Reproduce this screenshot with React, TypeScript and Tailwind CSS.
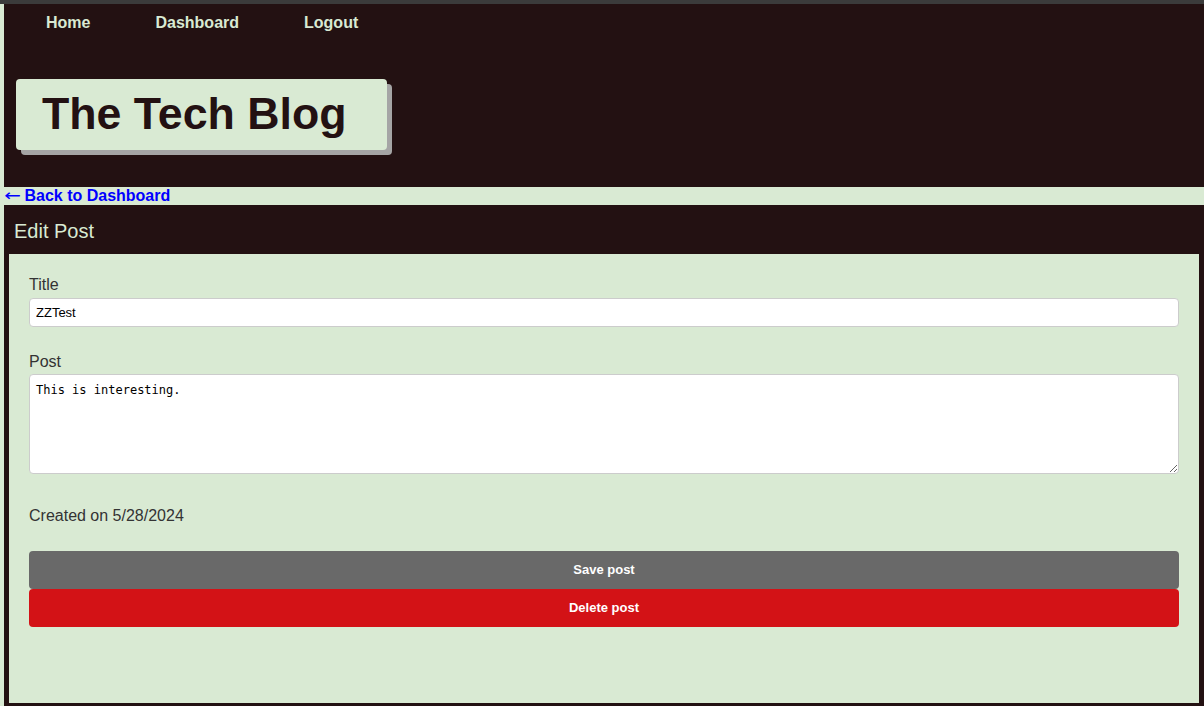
import React from "react";

const navLinks = ["Home", "Dashboard", "Logout"];

function Header() {
  return (
    <header className="bg-[#231112] h-[183px] pt-[10px]">
      <nav className="flex gap-[65px] pl-[42px]">
        {navLinks.map((link) => (
          <a key={link} href="#" className="text-[16px] font-bold text-[#d9ead3] leading-[18px]">
            {link}
          </a>
        ))}
      </nav>
      <div className="ml-[12px] mt-[47px] w-[371px] h-[71px] rounded-[4px] bg-[#d9ead3] shadow-[5px_5px_0_#a5a5a5] pl-[26px] flex items-center">
        <h1 className="text-[44.7px] font-bold text-[#231112] leading-none">The Tech Blog</h1>
      </div>
    </header>
  );
}

function EditPost() {
  return (
    <section className="bg-[#231112] flex-1 flex flex-col pb-[3px]">
      <h2 className="text-[20px] text-[#d9ead3] h-[49px] pl-[10px] flex items-center pt-[3px]">Edit Post</h2>
      <form className="mx-[5px] flex-1 bg-[#d9ead3] px-[20px] pt-[22px] text-[#333]">
        <label className="block text-[16px] leading-[18px]">Title</label>
        <input
          defaultValue="ZZTest"
          className="mt-[4px] w-full h-[29px] bg-white border border-[#ccc] rounded-[4px] px-[6px] text-[13px] text-black outline-none"
        />
        <label className="block mt-[26px] text-[16px] leading-[18px]">Post</label>
        <textarea
          defaultValue="This is interesting."
          className="mt-[3px] block w-full h-[100px] bg-white border border-[#ccc] rounded-[4px] px-[6px] py-[6px] text-[12px] text-black outline-none"
          style={{ fontFamily: '"DejaVu Sans Mono", monospace' }}
        />
        <p className="mt-[33px] text-[16px] leading-[18px]">Created on 5/28/2024</p>
        <button type="button" className="mt-[26px] w-full h-[38px] rounded-[4px] bg-[#696969] text-white text-[13px] font-bold">
          Save post
        </button>
        <button type="button" className="block w-full h-[38px] rounded-[4px] bg-[#d31216] text-white text-[13px] font-bold">
          Delete post
        </button>
      </form>
    </section>
  );
}

export default function App() {
  return (
    <div
      className="min-h-[706px] bg-[#d9ead3] border-t-[4px] border-[#3b3b3b] pl-[4px] flex flex-col"
      style={{ fontFamily: '"Liberation Sans", Arial, sans-serif' }}
    >
      <Header />
      <a href="#" className="block h-[18px] text-[16px] leading-[18px] font-bold text-[#0000ff]">
        <span
          style={{ fontFamily: '"DejaVu Sans", sans-serif' }}
          className="inline-block w-[16px] font-normal scale-x-[1.25] origin-left"
        >
          ←
        </span>{" "}
        Back to Dashboard
      </a>
      <EditPost />
    </div>
  );
}
